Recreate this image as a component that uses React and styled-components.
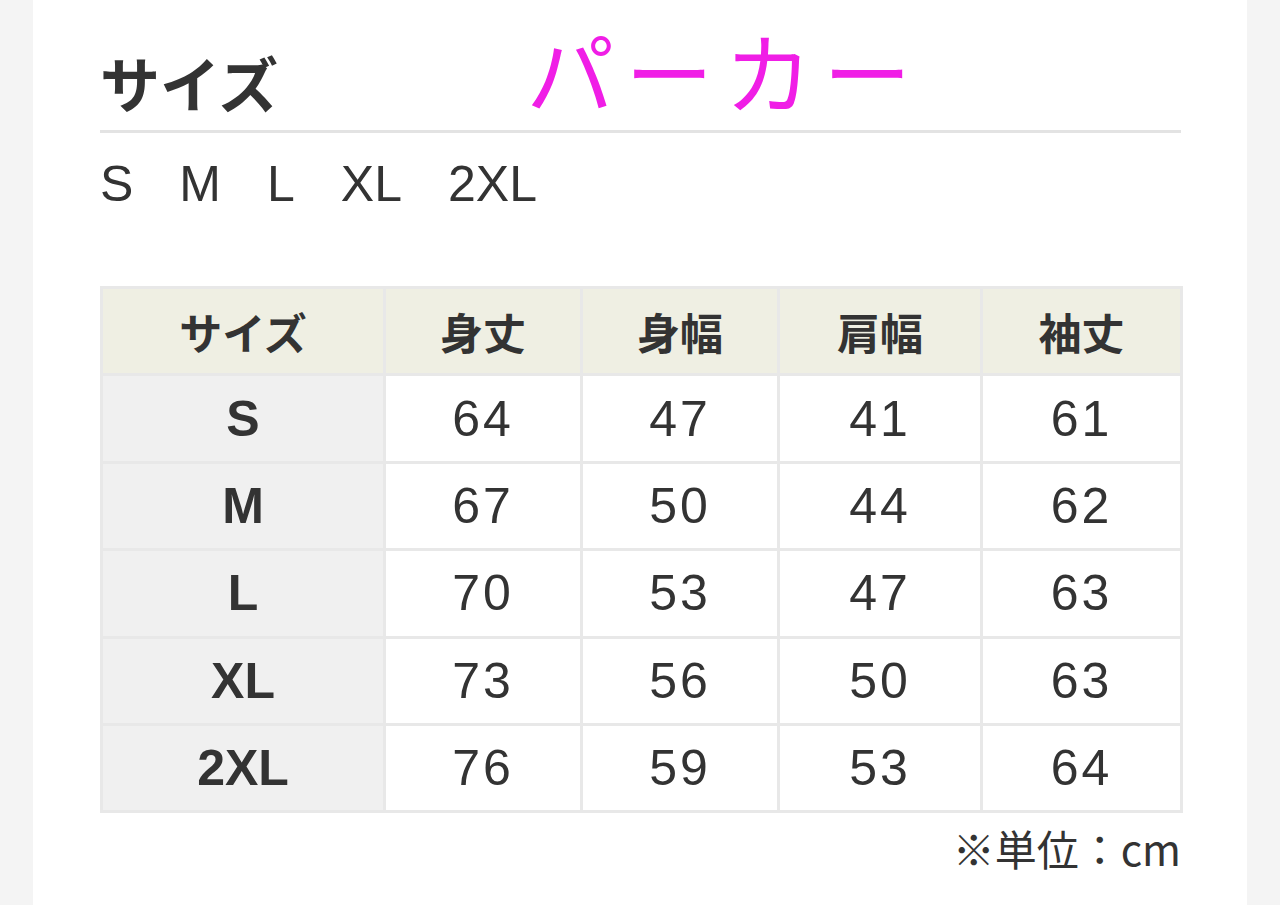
import React from 'react';
import styled, { createGlobalStyle } from 'styled-components';

const GlobalStyle = createGlobalStyle`
  html, body {
    margin: 0;
    padding: 0;
    background: #f4f4f4;
  }
  body {
    font-family: 'Liberation Sans', 'Noto Sans CJK JP', sans-serif;
    color: #333;
  }
`;

const sizes = ['S', 'M', 'L', 'XL', '2XL'];
const columns = ['サイズ', '身丈', '身幅', '肩幅', '袖丈'];
const colWidths = [280, 194, 194, 200, 197];
const rows = [
  { size: 'S', values: [64, 47, 41, 61] },
  { size: 'M', values: [67, 50, 44, 62] },
  { size: 'L', values: [70, 53, 47, 63] },
  { size: 'XL', values: [73, 56, 50, 63] },
  { size: '2XL', values: [76, 59, 53, 64] },
];

function App() {
  return (
    <>
      <GlobalStyle />
      <Panel>
        <Heading>
          <Title>サイズ</Title>
          <Product>パーカー</Product>
        </Heading>
        <SizeList>
          {sizes.map((s) => (
            <span key={s}>{s}</span>
          ))}
        </SizeList>
        <Table>
          <colgroup>
            {colWidths.map((w, i) => (
              <col key={i} style={{ width: w }} />
            ))}
          </colgroup>
          <thead>
            <tr>
              {columns.map((c) => (
                <HeadCell key={c}>{c}</HeadCell>
              ))}
            </tr>
          </thead>
          <tbody>
            {rows.map((r) => (
              <tr key={r.size}>
                <SizeCell>{r.size}</SizeCell>
                {r.values.map((v, i) => (
                  <ValueCell key={i}>{v}</ValueCell>
                ))}
              </tr>
            ))}
          </tbody>
        </Table>
        <Note>※単位：cm</Note>
      </Panel>
    </>
  );
}

export default App;

const Panel = styled.div`
  margin: 0 33px;
  min-height: 905px;
  box-sizing: border-box;
  background: #fff;
  padding: 0 66px 0 67px;
  overflow: hidden;
`;

const Heading = styled.div`
  display: flex;
  align-items: flex-end;
  gap: 248px;
  height: 133px;
  box-sizing: border-box;
  padding-bottom: 18px;
  border-bottom: 3px solid #e3e3e3;
  font-family: 'Noto Sans CJK JP', sans-serif;
`;

const Title = styled.h1`
  margin: 0;
  font-size: 60px;
  font-weight: 700;
  line-height: 1;
  color: #333;
`;

const Product = styled.div`
  font-size: 88px;
  font-weight: 400;
  line-height: 1.2;
  letter-spacing: 11px;
  color: #f01ee6;
  margin-bottom: -10px;
`;

const SizeList = styled.div`
  display: flex;
  gap: 46px;
  margin-top: 26px;
  font-family: 'Liberation Sans', sans-serif;
  font-size: 50px;
  font-weight: 400;
  line-height: 1;
  color: #333;
`;

const Table = styled.table`
  margin-top: 77px;
  width: 1083px;
  table-layout: fixed;
  border-collapse: separate;
  border-spacing: 3px;
  background: #e8e8e8;
`;

const Cell = styled.td`
  height: 84.4px;
  padding: 0;
  text-align: center;
  vertical-align: middle;
  color: #333;
  line-height: 1;
`;

const HeadCell = styled(Cell).attrs({ as: 'th' })`
  background: #efefe3;
  font-family: 'Noto Sans CJK JP', sans-serif;
  font-size: 43px;
  font-weight: 700;
`;

const SizeCell = styled(Cell)`
  background: #f0f0f0;
  font-family: 'Liberation Sans', sans-serif;
  font-size: 50px;
  font-weight: 700;
`;

const ValueCell = styled(Cell)`
  background: #fff;
  font-family: 'Liberation Sans', sans-serif;
  font-size: 50px;
  font-weight: 400;
  letter-spacing: 3px;
`;

const Note = styled.div`
  margin-top: 14px;
  text-align: right;
  font-family: 'Noto Sans CJK JP', sans-serif;
  font-size: 42px;
  line-height: 1;
  color: #333;
`;
